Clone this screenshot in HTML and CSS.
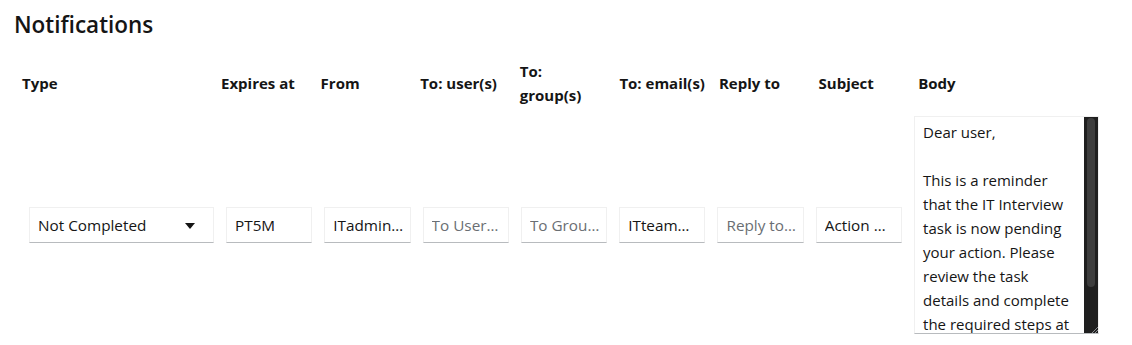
FILE: index.html
```html
<!DOCTYPE html>
<html lang="en">
<head>
  <meta charset="UTF-8" />
  <title>Notifications</title>
  <link rel="stylesheet" href="styles.css">
</head>
<body>

  <!-- Title -->
  <h1 class="title">Notifications</h1>

  <!-- Column headers -->
  <div class="head-row">
    <div class="th">Type</div>
    <div class="th">Expires at</div>
    <div class="th">From</div>
    <div class="th">To: user(s)</div>
    <div class="th">To:<br>group(s)</div>
    <div class="th">To: email(s)</div>
    <div class="th">Reply to</div>
    <div class="th">Subject</div>
    <div class="th">Body</div>
  </div>

  <!-- Notification row -->
  <div class="body-row">
    <div class="select-wrap">
      <select class="select">
        <option>Not Completed</option>
        <option>Not Started</option>
      </select>
      <svg class="caret" width="10" height="6" viewBox="0 0 10 6"><path d="M0 0 H10 L5 6 Z" fill="#151515"/></svg>
    </div>
    <input class="field" type="text" value="PT5M" />
    <input class="field" type="text" value="ITadmin@company.com" />
    <input class="field" type="text" placeholder="To Users (comma separated)" />
    <input class="field" type="text" placeholder="To Groups (comma separated)" />
    <input class="field" type="text" value="ITteam@company.com" />
    <input class="field" type="text" placeholder="Reply to address" />
    <input class="field" type="text" value="Action Needed: IT Interview task" />

    <!-- Body textarea with its scrollbar drawn beside it -->
    <div class="body-box">
      <textarea class="body-text">Dear user,

This is a reminder that the IT Interview task is now pending your action. Please review the task details and complete the required steps at your earliest convenience.</textarea>
      <div class="scroll-track">
        <div class="scroll-thumb"></div>
        <svg class="resizer" width="6" height="6" viewBox="0 0 6 6">
          <path d="M6 0 L0 6 M6 3 L3 6" stroke="#8a8d90" stroke-width="1"/>
        </svg>
      </div>
    </div>
  </div>

</body>
</html>
```

FILE: styles.css
```css
body {
  margin: 0;
  padding: 0 14px;
  background: #fff;
  color: #151515;
  font-family: "Open Sans", "Noto Sans", sans-serif;
}

.title {
  margin: 11px 0 0 0;
  font-size: 22.5px;
  line-height: 28px;
  font-weight: 600;
}

.head-row {
  display: grid;
  grid-template-columns: 199px repeat(7, 99.6px) 1fr;
  align-items: center;
  margin-top: 20px;
  padding-left: 8px;
}

.th {
  font-size: 15px;
  font-weight: 700;
  line-height: 24px;
  white-space: nowrap;
}

.body-row {
  display: flex;
  align-items: center;
  gap: 12px;
  margin-top: 9px;
  padding-left: 15px;
}

.select-wrap {
  position: relative;
  width: 185px;
  flex: none;
}

.select {
  appearance: none;
  width: 100%;
  height: 36px;
  padding: 0 8px;
  font: inherit;
  font-size: 15.3px;
  color: #151515;
  background: #fff;
  border: 1px solid #f0f0f0;
  border-bottom-color: #b8bbbe;
  border-radius: 0;
}

.caret {
  position: absolute;
  right: 19px;
  top: 16px;
}

.field {
  width: 86.3px;
  height: 36px;
  flex: none;
  box-sizing: border-box;
  padding: 0 5px 0 8px;
  font: inherit;
  font-size: 15.3px;
  color: #151515;
  background: #fff;
  border: 1px solid #f0f0f0;
  border-bottom-color: #b8bbbe;
  border-radius: 0;
  text-overflow: ellipsis;
}

.field::placeholder {
  color: #6a6e73;
}

.body-box {
  display: flex;
  width: 185px;
  height: 218px;
  flex: none;
  box-sizing: border-box;
  background: #fff;
  border: 1px solid #f0f0f0;
  border-bottom-color: #b8bbbe;
}

.body-text {
  flex: 1;
  min-width: 0;
  margin: 0;
  padding: 3px 7px 0 8px;
  font: inherit;
  font-size: 15px;
  line-height: 24px;
  color: #151515;
  background: #fff;
  border: none;
  outline: none;
  resize: none;
  overflow: hidden;
}

.scroll-track {
  position: relative;
  width: 14px;
  flex: none;
  background: #1f1f1f;
}

.scroll-thumb {
  margin: 1px 3px 0 3px;
  height: 169px;
  background: #3d3d3d;
  border-radius: 4px;
}

.resizer {
  position: absolute;
  right: 0;
  bottom: 0;
}
```
